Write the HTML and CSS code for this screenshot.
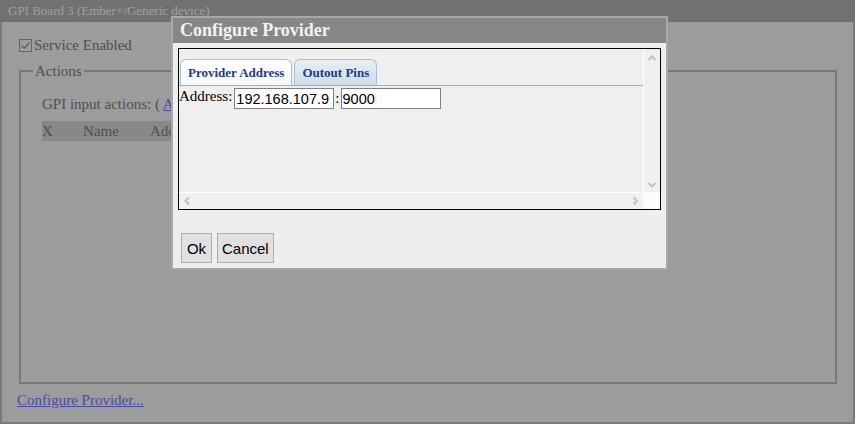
FILE: index.html
```html
<!DOCTYPE html>
<html>
<head>
<meta charset="utf-8">
<title>GPI Board 3</title>
<link rel="stylesheet" href="styles.css">
</head>
<body>
<div class="page">
  <div class="titlebar">GPI Board 3 (Ember+/Generic device)</div>
  <div class="panel">
    <label class="service"><span class="check"><svg width="11" height="11" viewBox="0 0 11 11"><polyline points="1.5,5.5 4.2,8.3 9.5,2.5" fill="none" stroke="#9a9a9a" stroke-width="1.3"/></svg></span>Service Enabled</label>
    <fieldset class="actions">
      <legend>Actions</legend>
      <div class="actions-body">
        <div class="gpi-line">GPI input actions: ( <a href="#">Add</a> )</div>
        <table class="gpi-table">
          <thead>
            <tr><th class="c-x">X</th><th class="c-name">Name</th><th class="c-addr">Address</th><th class="c-act">Action</th></tr>
          </thead>
        </table>
      </div>
    </fieldset>
    <a class="config-link" href="#">Configure Provider...</a>
  </div>
</div>
<div class="overlay"></div>
<div class="dialog">
  <div class="dialog-title">Configure Provider</div>
  <div class="dialog-body">
    <div class="scrollbox">
      <div class="scroll-content">
        <div class="tabs">
          <div class="tab active">Provider Address</div>
          <div class="tab">Outout Pins</div>
        </div>
        <div class="addr-row">
          <span class="addr-label">Address:</span>
          <input class="field" type="text" value="192.168.107.9">
          <span class="colon">:</span>
          <input class="field" type="text" value="9000">
        </div>
      </div>
      <div class="vbar">
        <svg width="16" height="16" viewBox="0 0 16 16"><polyline points="4.5,11 8,7.5 11.5,11" fill="none" stroke="#c1c1c1" stroke-width="2"/></svg>
        <svg width="16" height="16" viewBox="0 0 16 16"><polyline points="4.5,7 8,10.5 11.5,7" fill="none" stroke="#c1c1c1" stroke-width="2"/></svg>
      </div>
      <div class="hbar">
        <svg width="16" height="16" viewBox="0 0 16 16"><polyline points="10,4.5 6.5,8 10,11.5" fill="none" stroke="#c1c1c1" stroke-width="2"/></svg>
        <svg width="16" height="16" viewBox="0 0 16 16"><polyline points="6.5,4.5 10,8 6.5,11.5" fill="none" stroke="#c1c1c1" stroke-width="2"/></svg>
      </div>
      <div class="corner"></div>
    </div>
    <div class="buttons">
      <button type="button">Ok</button>
      <button type="button">Cancel</button>
    </div>
  </div>
</div>
</body>
</html>
```
FILE: styles.css
```css
html, body {
  margin: 0;
  padding: 0;
}
body {
  width: 855px;
  height: 424px;
  overflow: hidden;
  position: relative;
  font-family: "Liberation Serif", "Times New Roman", serif;
}
.page {
  display: flex;
  flex-direction: column;
  height: 424px;
}
.titlebar {
  height: 22px;
  line-height: 22px;
  background: #aeaeae;
  color: #f4f4f4;
  font-size: 13px;
  padding-left: 8px;
}
.panel {
  flex: 1;
  background: #f0f0f0;
  border: 2px solid #bcbcbc;
  border-top: 0;
  padding: 0 14px 0 15px;
  color: #7a7a7a;
  font-size: 15px;
  display: flex;
  flex-direction: column;
  align-items: flex-start;
}
.service {
  display: flex;
  align-items: center;
  margin: 14px 0 0 2px;
  height: 18px;
  line-height: 18px;
}
.check {
  width: 13px;
  height: 13px;
  box-sizing: border-box;
  border: 1px solid #9a9a9a;
  margin-right: 2px;
  display: inline-flex;
  background: #f0f0f0;
}
.actions {
  align-self: stretch;
  margin: 8px 2px 0;
  padding: 0 12px;
  border: 2px solid #b8b8b8;
  height: 322px;
  box-sizing: border-box;
  min-width: 0;
}
.actions legend {
  padding: 0 2px;
  line-height: 18px;
}
.actions-body {
  margin-left: 9px;
  padding-top: 15px;
}
.gpi-line {
  line-height: 18px;
}
.gpi-line a {
  color: #7373ff;
}
.gpi-table {
  margin-top: 8px;
  border-collapse: collapse;
  background: #d2d2d2;
  color: #7a7a7a;
  font-size: 15px;
}
.gpi-table th {
  font-weight: normal;
  text-align: left;
  padding: 0;
  height: 20px;
  line-height: 20px;
}
.c-x { width: 41px; }
.c-name { width: 67px; }
.c-addr { width: 110px; }
.c-act { width: 120px; }
.config-link {
  margin-top: 7px;
  line-height: 18px;
  color: #7373ff;
}
.overlay {
  position: absolute;
  inset: 0;
  background: rgba(0, 0, 0, 0.35);
}
.dialog {
  position: absolute;
  left: 171px;
  top: 16px;
  width: 497px;
  box-sizing: border-box;
  border: 2px solid #a8a8a8;
  background: #eeeeee;
}
.dialog-title {
  height: 25px;
  line-height: 25px;
  background: #878787;
  color: #f2f2f2;
  font-weight: bold;
  font-size: 18px;
  padding-left: 7px;
}
.dialog-body {
  padding: 5px;
}
.scrollbox {
  display: grid;
  grid-template-columns: 1fr 17px;
  grid-template-rows: 1fr 17px;
  height: 162px;
  box-sizing: border-box;
  border: 1px solid #000;
}
.scroll-content {
  background: #efefef;
  padding-top: 10px;
  overflow: hidden;
}
.tabs {
  display: flex;
  gap: 2px;
  border-bottom: 1px solid #91b3c2;
  padding-left: 1px;
}
.tab {
  height: 25px;
  line-height: 25px;
  border: 1px solid #a7c3d1;
  border-bottom: 0;
  border-radius: 6px 6px 0 0;
  padding: 0 7px;
  font-weight: bold;
  font-size: 13px;
  color: #26398e;
  background: linear-gradient(#e6eff5, #cddde7);
}
.tab.active {
  background: linear-gradient(#ffffff, #f6f9fb);
}
.addr-row {
  display: flex;
  align-items: flex-start;
  margin-top: 2px;
}
.addr-label {
  font-size: 15px;
  line-height: 17px;
  margin-right: 2px;
  color: #000;
}
.field {
  width: 100px;
  height: 21px;
  box-sizing: border-box;
  border: 1px solid #7f7f7f;
  padding: 0 1px;
  margin: 0;
  font: 14.5px "Liberation Sans", Arial, sans-serif;
  background: #fff;
  color: #000;
  outline: none;
}
.colon {
  font-size: 15px;
  line-height: 21px;
  margin: 0 1px;
}
.vbar {
  background: #f0f0f0;
  border-left: 1px solid #fff;
  display: flex;
  flex-direction: column;
  justify-content: space-between;
}
.hbar {
  background: #f0f0f0;
  border-top: 1px solid #fff;
  display: flex;
  justify-content: space-between;
}
.vbar svg, .hbar svg {
  display: block;
}
.corner {
  background: #fbfbfb;
}
.buttons {
  display: flex;
  gap: 5px;
  margin: 23px 0 0 3px;
}
.buttons button {
  font: 15px "Liberation Sans", Arial, sans-serif;
  height: 30px;
  min-width: 31px;
  padding: 0 4px;
  margin: 0;
  background: #e1e1e1;
  border: 1px solid #adadad;
  border-radius: 0;
  color: #000;
}
```
